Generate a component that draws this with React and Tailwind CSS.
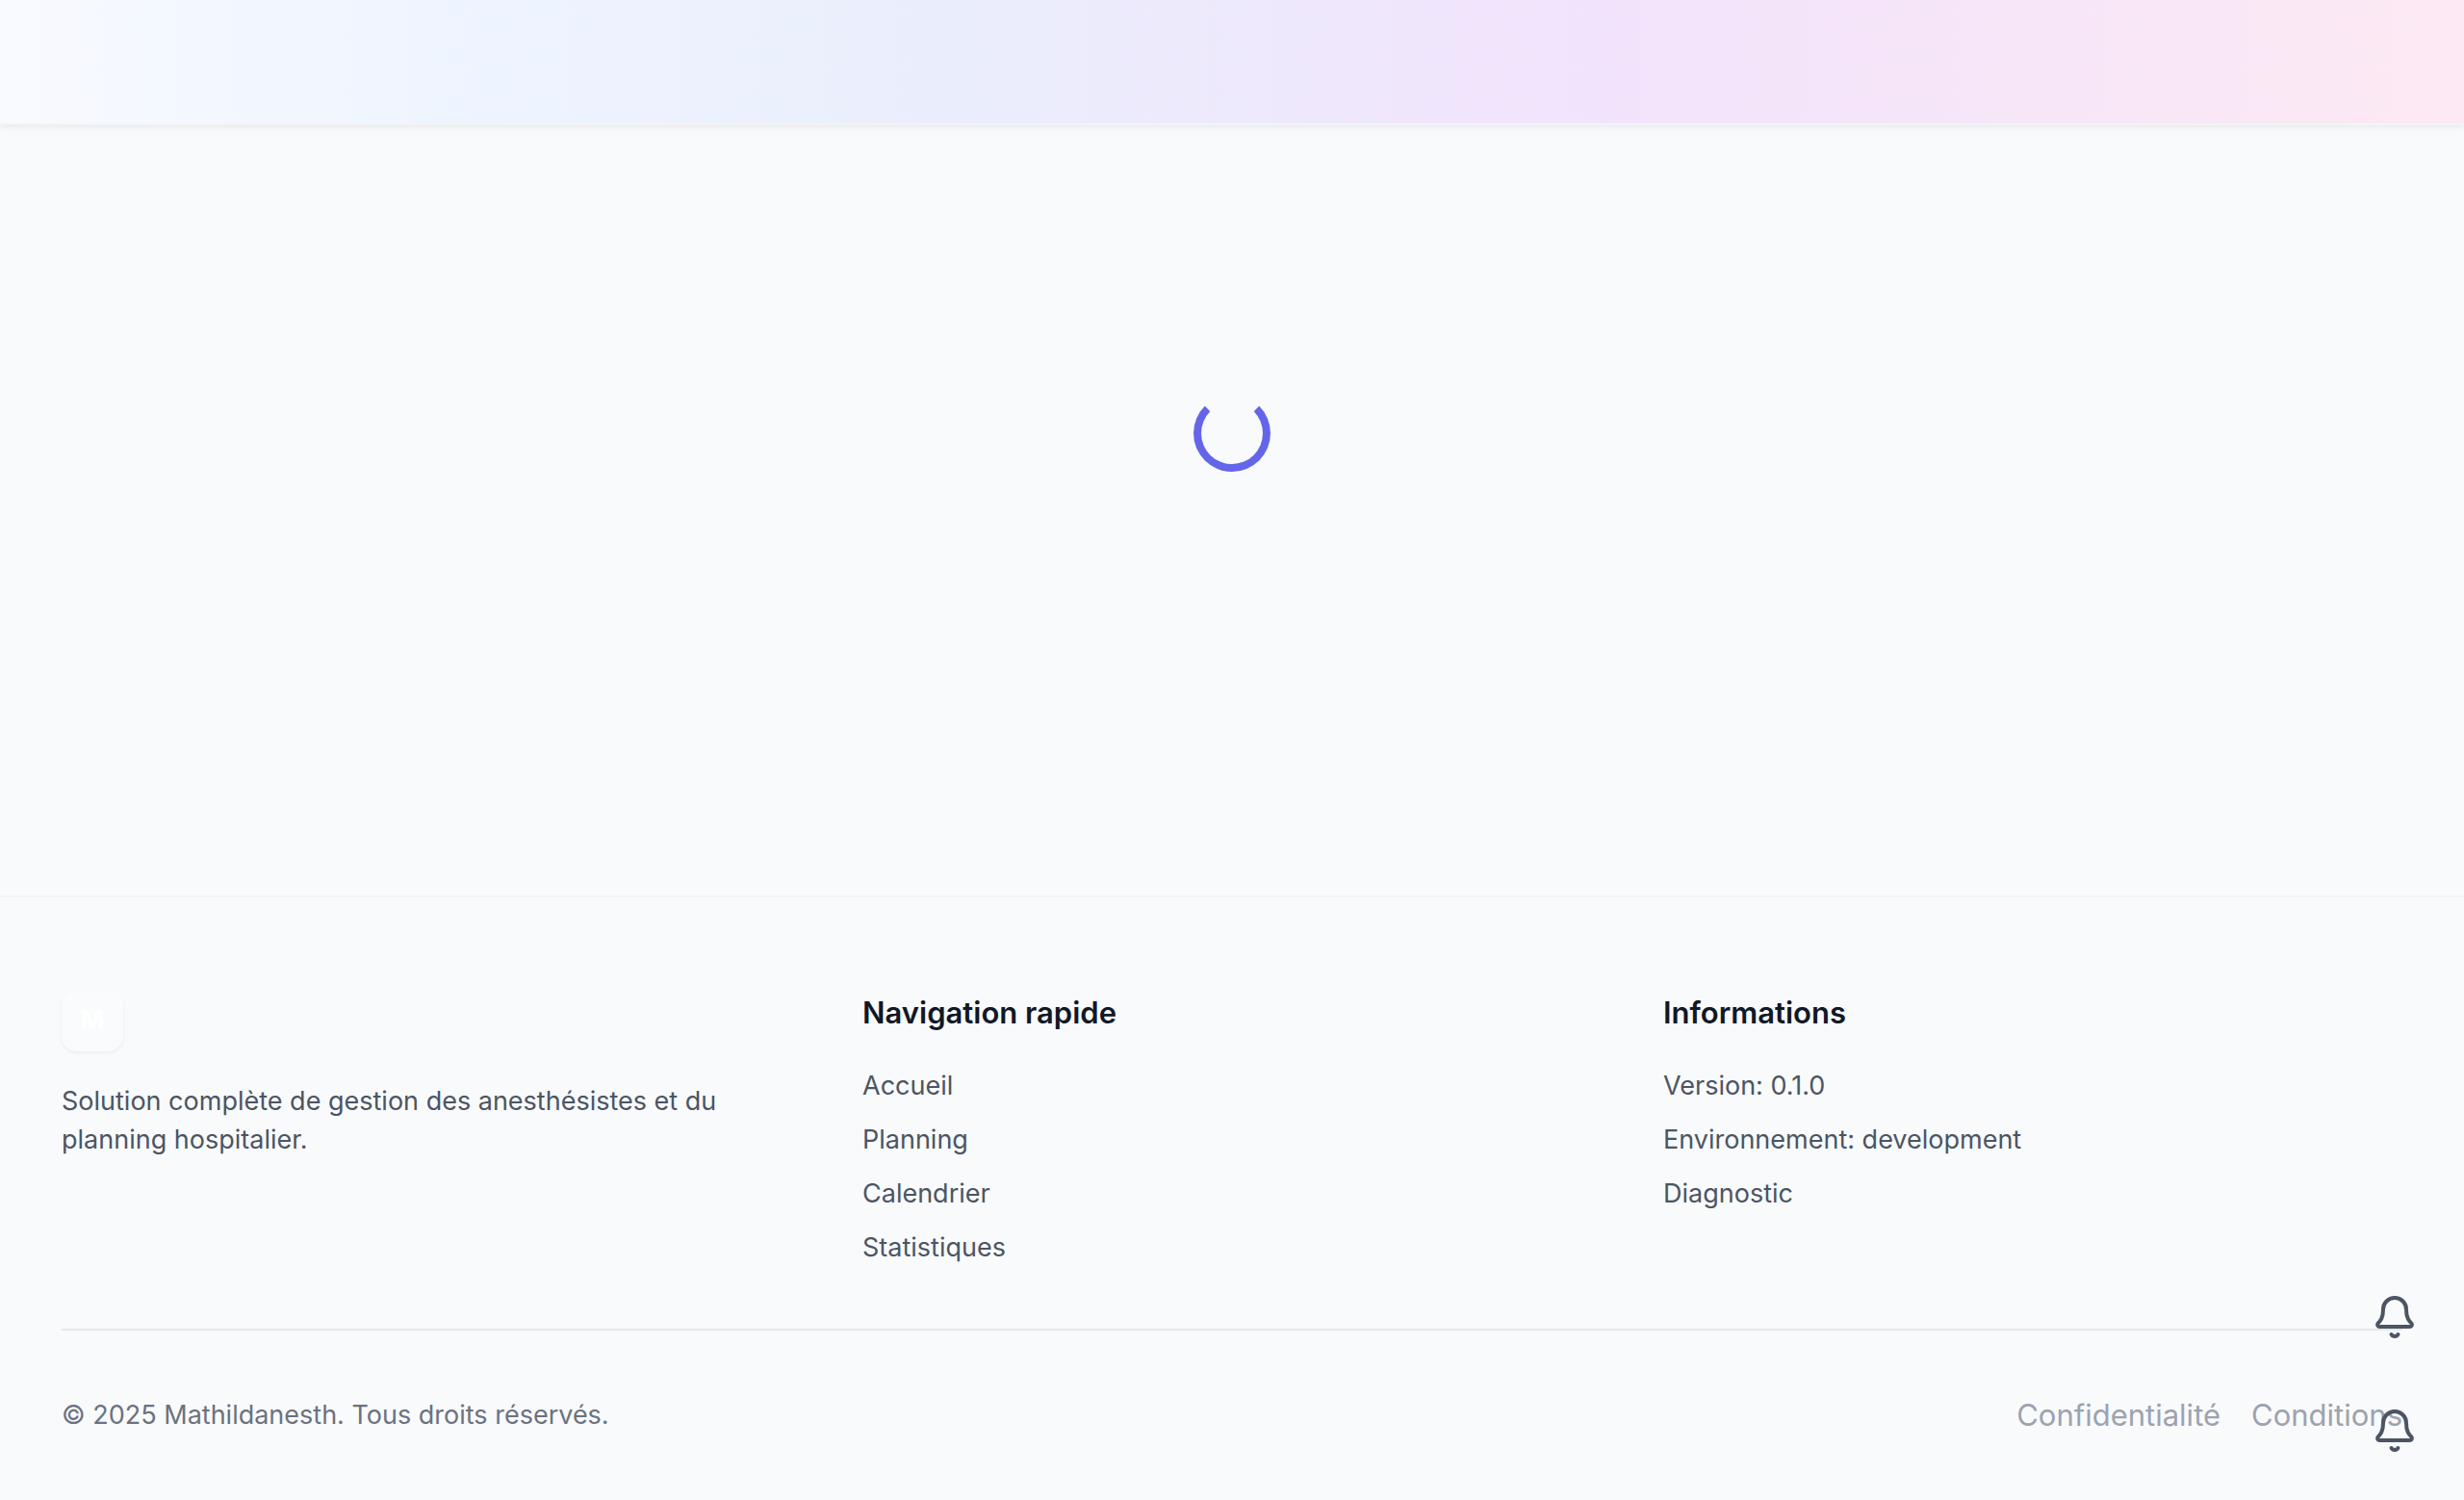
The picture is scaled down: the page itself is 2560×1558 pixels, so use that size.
import { Bell } from "lucide-react";

const navigation = ["Accueil", "Planning", "Calendrier", "Statistiques"];

function FooterLink({ children }) {
  return (
    <a href="#" className="hover:text-indigo-600">
      {children}
    </a>
  );
}

export default function App() {
  return (
    <div className="flex min-h-screen flex-col bg-[#f9fafc] font-['Inter',sans-serif] text-[31px] leading-[48px] text-[#111827]">
      <header className="h-[130px] border-b-2 border-[#f3f4f6] bg-[linear-gradient(to_right,#f9faff_0%,#f4f8ff_6%,#eef4ff_20%,#eaeefc_38%,#f2e3fc_65%,#fce9f3_100%)] bg-clip-padding shadow-[0_2px_6px_rgba(0,0,0,0.08)]" />

      <main className="grow">
        <div className="flex h-[640px] items-center justify-center" role="status" aria-label="Chargement">
          <div className="size-20 rounded-full border-8 border-[#6366e9] border-t-transparent" />
        </div>
      </main>

      <footer className="border-t-2 border-[#f3f4f6] px-16 pt-24 pb-16">
        <div className="grid grid-cols-3 gap-16 text-[27px] leading-[40px] text-[#4b5563]">
          <section className="flex flex-col gap-8">
            <div className="flex size-16 items-center justify-center rounded-2xl bg-[#fafbfd] font-bold text-white shadow-[0_2px_4px_rgba(0,0,0,0.05)]">
              M
            </div>
            <p>Solution complète de gestion des anesthésistes et du planning hospitalier.</p>
          </section>

          <nav className="flex flex-col gap-8" aria-labelledby="nav-title">
            <h3 id="nav-title" className="text-[31px] leading-[48px] font-semibold text-[#111827]">
              Navigation rapide
            </h3>
            <ul className="flex flex-col gap-4">
              {navigation.map((label) => (
                <li key={label}>
                  <FooterLink>{label}</FooterLink>
                </li>
              ))}
            </ul>
          </nav>

          <section className="flex flex-col gap-8">
            <h3 className="text-[31px] leading-[48px] font-semibold text-[#111827]">Informations</h3>
            <ul className="flex flex-col gap-4">
              <li>Version: 0.1.0</li>
              <li>Environnement: development</li>
              <li>
                <FooterLink>Diagnostic</FooterLink>
              </li>
            </ul>
          </section>
        </div>

        <div className="mt-16 flex items-center justify-between border-t-2 border-[#e5e7eb] pt-16">
          <p className="text-[27px] leading-[40px] text-[#6b7280]">© 2025 Mathildanesth. Tous droits réservés.</p>
          <div className="flex gap-8 text-[#9ca3af]">
            <FooterLink>Confidentialité</FooterLink>
            <FooterLink>Conditions</FooterLink>
          </div>
        </div>
      </footer>

      <div className="fixed right-8 bottom-8 flex flex-col gap-[38px] text-[#4b5563]">
        <button type="button" aria-label="Notifications" className="rounded-full p-4">
          <Bell className="size-12" />
        </button>
        <button type="button" aria-label="Alertes" className="rounded-full p-4">
          <Bell className="size-12" />
        </button>
      </div>
    </div>
  );
}
